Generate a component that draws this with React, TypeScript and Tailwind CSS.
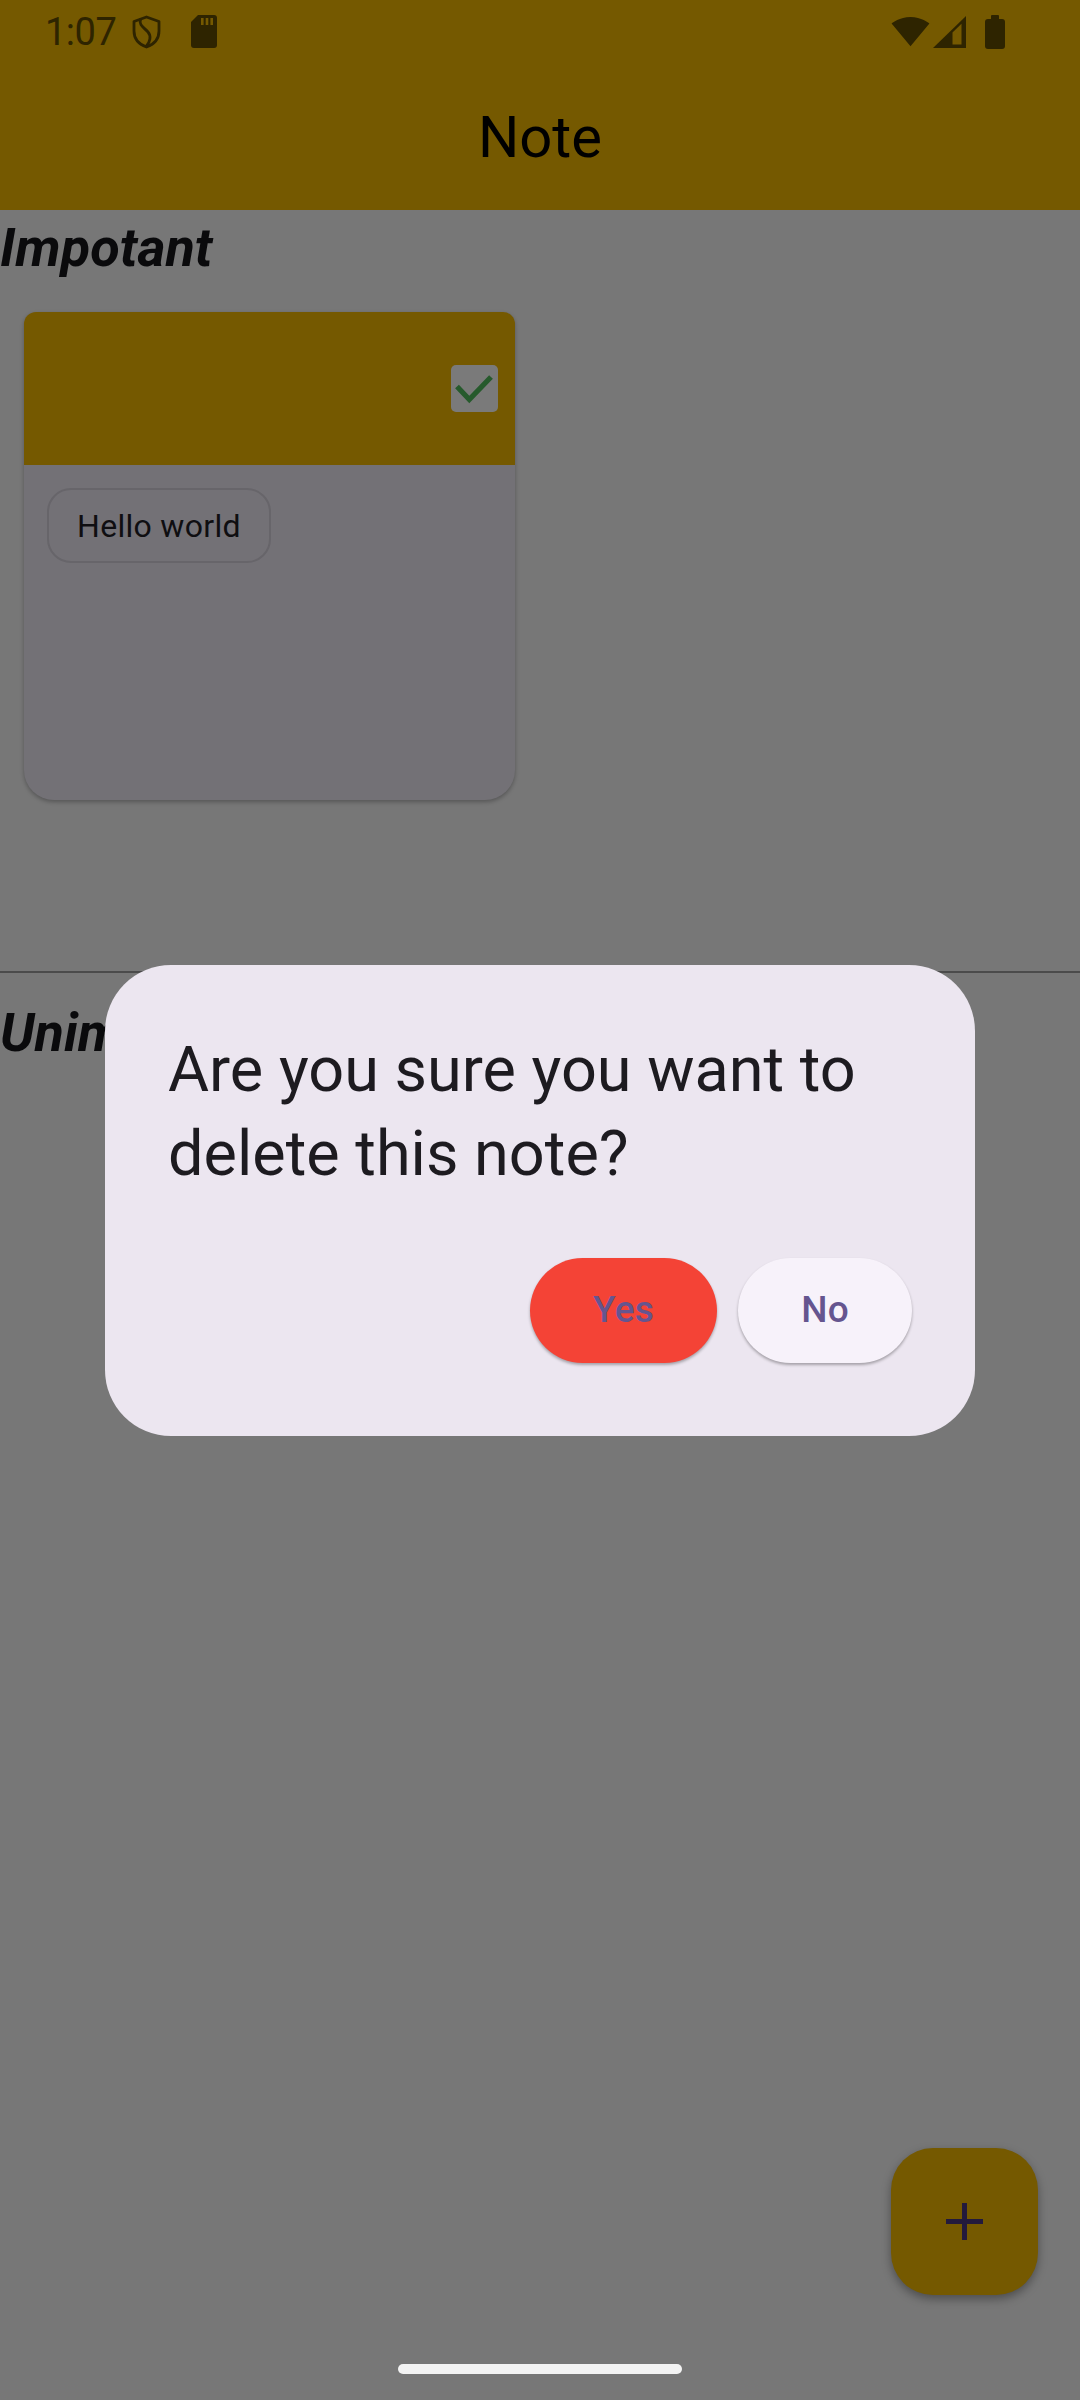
import React from 'react'

function StatusBar() {
  return (
    <div className="flex h-[63px] items-center justify-between pl-[45px] pr-[75px] text-[#2e2400]">
      <div className="flex items-center">
        <span className="text-[38px] leading-none tracking-[-0.5px]">1:07</span>
        <svg className="ml-[16px]" width="29" height="34" viewBox="0 0 29 34" fill="none">
          <path d="M14.5 2 L27 6.5 V16 C27 24 21.5 29.5 14.5 32 C7.5 29.5 2 24 2 16 V6.5 Z" stroke="#2e2400" strokeWidth="2.8" strokeLinejoin="round" />
          <path d="M8.5 4.5 C6.5 10 12 12.5 16 17 C19.5 21 18 27 14.5 31" stroke="#2e2400" strokeWidth="2.8" strokeLinecap="round" />
        </svg>
        <svg className="ml-[30px]" width="26" height="33" viewBox="0 0 26 33">
          <path d="M7 0 H23 A3 3 0 0 1 26 3 V30 A3 3 0 0 1 23 33 H3 A3 3 0 0 1 0 30 V7 Z" fill="#2e2400" />
          <rect x="10" y="3" width="2.6" height="7" fill="#755900" />
          <rect x="14.7" y="3" width="2.6" height="7" fill="#755900" />
          <rect x="19.4" y="3" width="2.6" height="7" fill="#755900" />
        </svg>
      </div>
      <div className="flex items-center">
        <svg width="39" height="33" viewBox="0 2.6 24 18.6">
          <path d="M12 21 L23.64 7 C23.19 6.66 18.71 3 12 3 C5.28 3 0.81 6.66 0.36 7 Z" fill="#2e2400" />
        </svg>
        <svg className="ml-[3px]" width="33" height="32" viewBox="0 0 33 32">
          <polygon points="0,32 33,0 33,32" fill="#2e2400" />
          <polygon points="19.5,16.5 28.5,7.8 28.5,28.5 19.5,28.5" fill="#755900" />
        </svg>
        <svg className="ml-[19px]" width="20" height="34" viewBox="0 0 20 34">
          <rect x="6" y="0" width="8" height="5" rx="1" fill="#2e2400" />
          <rect x="0" y="4" width="20" height="30" rx="3" fill="#2e2400" />
        </svg>
      </div>
    </div>
  )
}

function NoteCard() {
  return (
    <div className="w-[491px] overflow-hidden rounded-t-[12px] rounded-b-[30px] bg-[#737176] shadow-[0_2px_4px_rgba(0,0,0,0.28)]">
      <div className="flex h-[153px] items-center justify-end bg-[#755900] pr-[17px]">
        <div className="h-[47px] w-[47px] rounded-[5px] bg-[#7a7a7a]">
          <svg width="47" height="47" viewBox="0 0 47 47" fill="none">
            <path d="M6 21.5 L18.3 34.5 L40 12" stroke="#265a2c" strokeWidth="5.2" />
          </svg>
        </div>
      </div>
      <div className="h-[335px] pl-[23px] pt-[23px]">
        <div className="flex h-[75px] w-fit items-center rounded-[24px] border-2 border-[#67656a] px-[28px]">
          <span className="text-[32px] leading-none tracking-[0.3px] text-[#0f0e11]">Hello world</span>
        </div>
      </div>
    </div>
  )
}

function DeleteDialog() {
  return (
    <div className="absolute inset-0 flex items-center justify-center">
      <div className="w-[870px] rounded-[66px] bg-[#ece6f0] px-[63px] pb-[73px] pt-[63px]">
        <p className="text-[63px] leading-[84px] text-[#1d1b20]">
          Are you sure you want to delete this note?
        </p>
        <div className="mt-[62px] flex justify-end gap-[21px]">
          <button className="flex h-[105px] items-center rounded-full bg-[#f44336] px-[63px] text-[37px] font-medium tracking-[0.3px] text-[#65558f] shadow-[0_2px_3px_rgba(0,0,0,0.3)]">
            Yes
          </button>
          <button className="flex h-[105px] items-center rounded-full bg-[#f7f2fa] px-[63px] text-[37px] font-medium tracking-[0.3px] text-[#65558f] shadow-[0_2px_3px_rgba(0,0,0,0.3)]">
            No
          </button>
        </div>
      </div>
    </div>
  )
}

export default function App() {
  return (
    <div className="relative h-[2400px] w-[1080px] overflow-hidden bg-[#777777] font-['Roboto',sans-serif]">
      <header className="bg-[#755900]">
        <StatusBar />
        <div className="flex h-[147px] items-center justify-center">
          <h1 className="text-[58px] leading-none text-black">Note</h1>
        </div>
      </header>

      <section className="h-[761px] pt-[10px]">
        <h2 className="text-[54px] font-bold italic leading-[56px] text-[#0a0a0c]">Impotant</h2>
        <div className="mt-[36px] pl-[24px]">
          <NoteCard />
        </div>
      </section>

      <div className="h-[2px] bg-[#4b4b4b]" />

      {/* mostly hidden behind the dialog, as in the app */}
      <section className="pt-[32px]">
        <h2 className="text-[54px] font-bold italic leading-[56px] text-[#0a0a0c]">Unimpotant</h2>
      </section>

      <DeleteDialog />

      <button className="absolute bottom-[105px] right-[42px] flex h-[147px] w-[147px] items-center justify-center rounded-[42px] bg-[#755900] shadow-[0_4px_10px_rgba(0,0,0,0.35)]">
        <svg width="37" height="37" viewBox="0 0 37 37">
          <rect x="16" y="0" width="5" height="37" fill="#231a3c" />
          <rect x="0" y="16" width="37" height="5" fill="#231a3c" />
        </svg>
      </button>

      <div className="absolute bottom-[26px] left-[398px] h-[10px] w-[284px] rounded-full bg-[#f3f3f3]" />
    </div>
  )
}
